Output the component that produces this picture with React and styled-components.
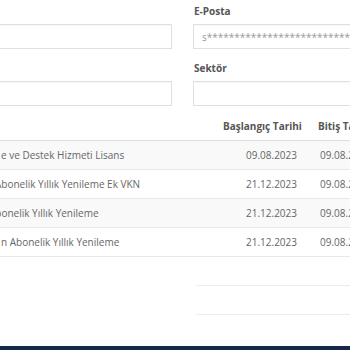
import React from 'react';
import styled, {createGlobalStyle} from 'styled-components';

const GlobalStyle = createGlobalStyle`
    html, body {
        margin: 0;
        padding: 0;
        background: #fff;
        overflow: hidden;
    }
    body {
        font-family: "Open Sans", "Noto Sans", sans-serif;
        font-size: 10px;
        color: #666;
    }
`;

const rows = [
    {name: 'e ve Destek Hizmeti Lisans', shift: 1, start: '09.08.2023', end: '09.08.2024'},
    {name: 'Abonelik Yıllık Yenileme Ek VKN', shift: -5, start: '21.12.2023', end: '09.08.2024'},
    {name: 'Abonelik Yıllık Yenileme', shift: -11, start: '21.12.2023', end: '09.08.2024'},
    {name: 'n Abonelik Yıllık Yenileme', shift: 1, start: '21.12.2023', end: '09.08.2024'},
];

const App = () => {
    return(
        <StyledPage>
            <GlobalStyle/>
            <StyledForm>
                <StyledField>
                    <StyledLabel>&nbsp;</StyledLabel>
                    <StyledInput/>
                </StyledField>
                <StyledField>
                    <StyledLabel>E-Posta</StyledLabel>
                    <StyledInput>
                        <StyledValue>s*******************************</StyledValue>
                    </StyledInput>
                </StyledField>
                <StyledField>
                    <StyledLabel>&nbsp;</StyledLabel>
                    <StyledInput/>
                </StyledField>
                <StyledField>
                    <StyledLabel>Sektör</StyledLabel>
                    <StyledInput/>
                </StyledField>
            </StyledForm>
            <StyledTable>
                <thead>
                    <tr>
                        <StyledHead></StyledHead>
                        <StyledHead $align="right">Başlangıç Tarihi</StyledHead>
                        <StyledHead $end>Bitiş Tarihi</StyledHead>
                    </tr>
                </thead>
                <tbody>
                    {rows.map((row, i) => (
                        <StyledRow key={i} $striped={i % 2 === 0}>
                            <StyledCell>
                                <StyledName style={{marginLeft: row.shift}}>{row.name}</StyledName>
                            </StyledCell>
                            <StyledCell $align="right">{row.start}</StyledCell>
                            <StyledCell $end>{row.end}</StyledCell>
                        </StyledRow>
                    ))}
                </tbody>
            </StyledTable>
            <StyledSummary>
                <StyledSummaryRow/>
                <StyledSummaryRow/>
            </StyledSummary>
            <StyledFooter/>
        </StyledPage>
    );
};

const StyledPage = styled.div`
    width: 350px;
    height: 350px;
    overflow: hidden;
    position: relative;
`;

const StyledForm = styled.div`
    display: grid;
    grid-template-columns: 182px 200px;
    column-gap: 21px;
    row-gap: 12px;
    margin-left: -10px;
    padding-top: 4px;
`;

const StyledField = styled.div`
    display: flex;
    flex-direction: column;
    gap: 5px;
`;

const StyledLabel = styled.label`
    font-weight: 700;
    font-size: 10px;
    line-height: 15px;
    color: #555;
    padding-left: 1px;
`;

const StyledInput = styled.div`
    box-sizing: border-box;
    height: 25px;
    border: 1px solid #e0e0e0;
    box-shadow: inset 0 1px 1px rgba(0, 0, 0, 0.03);
    display: flex;
    align-items: center;
    padding-left: 8px;
    overflow: hidden;
`;

const StyledValue = styled.span`
    color: #999;
    font-size: 10px;
    white-space: nowrap;
`;

const StyledTable = styled.table`
    margin-top: 5px;
    border-collapse: collapse;
    table-layout: fixed;
    width: 400px;
`;

const StyledHead = styled.th`
    box-sizing: border-box;
    font-weight: 700;
    color: #555;
    font-size: 10px;
    line-height: 14px;
    padding: 8px 8px 7px ${p => p.$end ? '13px' : '8px'};
    text-align: ${p => p.$align || 'left'};
    border-bottom: 1px solid #dcdcdc;
    white-space: nowrap;
    &:first-child { width: 215px; padding-left: 0; }
    &:nth-child(2) { width: 90px; }
`;

const StyledRow = styled.tr`
    background: ${p => p.$striped ? '#f9f9f9' : '#fff'};
    border-bottom: 1px solid #e8e8e8;
`;

const StyledCell = styled.td`
    font-size: 10px;
    line-height: 14px;
    color: #666;
    padding: 7px 8px 7px ${p => p.$end ? '15px' : '8px'};
    text-align: ${p => p.$align || 'left'};
    white-space: nowrap;
    overflow: hidden;
    &:first-child { padding-left: 0; }
`;

const StyledName = styled.span`
    display: inline-block;
`;

const StyledSummary = styled.div`
    margin-top: 28px;
    margin-left: 196px;
`;

const StyledSummaryRow = styled.div`
    height: 29px;
    border-top: 1px solid #ececec;
    box-sizing: border-box;
`;

const StyledFooter = styled.div`
    position: absolute;
    left: 0;
    right: 0;
    bottom: 0;
    height: 4px;
    background: #15284a;
`;

export default App;
